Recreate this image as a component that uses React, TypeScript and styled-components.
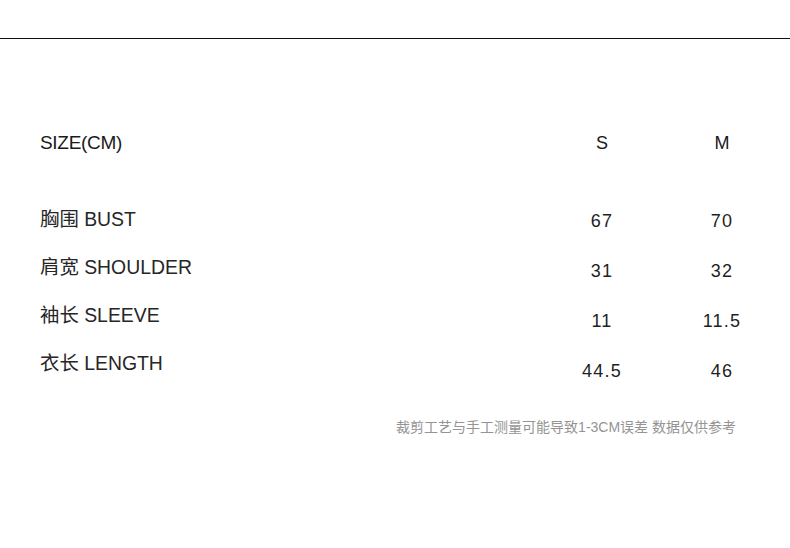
import React from "react";
import styled, { createGlobalStyle } from "styled-components";

const GlobalStyle = createGlobalStyle`
  html, body { margin: 0; padding: 0; background: #ffffff; }
  *, *::before, *::after { box-sizing: border-box; }
  body {
    font-family: "Liberation Sans", "Noto Sans CJK SC", Arial, sans-serif;
    color: #1a1a1a;
  }
`;

const Page = styled.div`
  width: 790px;
  height: 548px;
  background: #ffffff;
  overflow: hidden;
`;

const TopRule = styled.div`
  margin-top: 38px;
  height: 1px;
  background: #111111;
`;

const Table = styled.div`
  display: flex;
  margin-top: 92px;
  padding: 0 8px 0 40px;
`;

const LabelColumn = styled.div`
  flex: 1;
  display: flex;
  flex-direction: column;
  gap: 24px;
`;

const SizeColumn = styled.div`
  width: 120px;
  display: flex;
  flex-direction: column;
  align-items: center;
  gap: 26px;
`;

const Cell = styled.div<{ $head?: boolean }>`
  height: 24px;
  line-height: 24px;
  white-space: nowrap;
  margin-bottom: ${(p) => (p.$head ? "28px" : "0")};
`;

const HeadTitle = styled(Cell)`
  font-size: 19px;
  letter-spacing: -0.3px;
  color: #1a1a1a;
`;

const Label = styled(Cell)`
  font-size: 19.4px;
  color: #262626;
`;

const SizeName = styled(Cell)`
  font-size: 18px;
  color: #1a1a1a;
  margin-bottom: 26px;
`;

const Value = styled(Cell)`
  font-size: 18px;
  letter-spacing: 1.2px;
  color: #1f1f1f;
  padding-top: 2px;
`;

const Note = styled.div`
  margin-top: 36px;
  padding-right: 54px;
  text-align: right;
  font-size: 14px;
  line-height: 20px;
  color: #949494;
  white-space: nowrap;
`;

const rows = [
  { label: "胸围 BUST", s: "67", m: "70" },
  { label: "肩宽 SHOULDER", s: "31", m: "32" },
  { label: "袖长 SLEEVE", s: "11", m: "11.5" },
  { label: "衣长 LENGTH", s: "44.5", m: "46" },
];

export default function App() {
  return (
    <Page>
      <GlobalStyle />
      <TopRule />
      <Table>
        <LabelColumn>
          <HeadTitle $head>SIZE(CM)</HeadTitle>
          {rows.map((r) => (
            <Label key={r.label}>{r.label}</Label>
          ))}
        </LabelColumn>
        <SizeColumn>
          <SizeName>S</SizeName>
          {rows.map((r) => (
            <Value key={r.label}>{r.s}</Value>
          ))}
        </SizeColumn>
        <SizeColumn>
          <SizeName>M</SizeName>
          {rows.map((r) => (
            <Value key={r.label}>{r.m}</Value>
          ))}
        </SizeColumn>
      </Table>
      <Note>裁剪工艺与手工测量可能导致1-3CM误差 数据仅供参考</Note>
    </Page>
  );
}
